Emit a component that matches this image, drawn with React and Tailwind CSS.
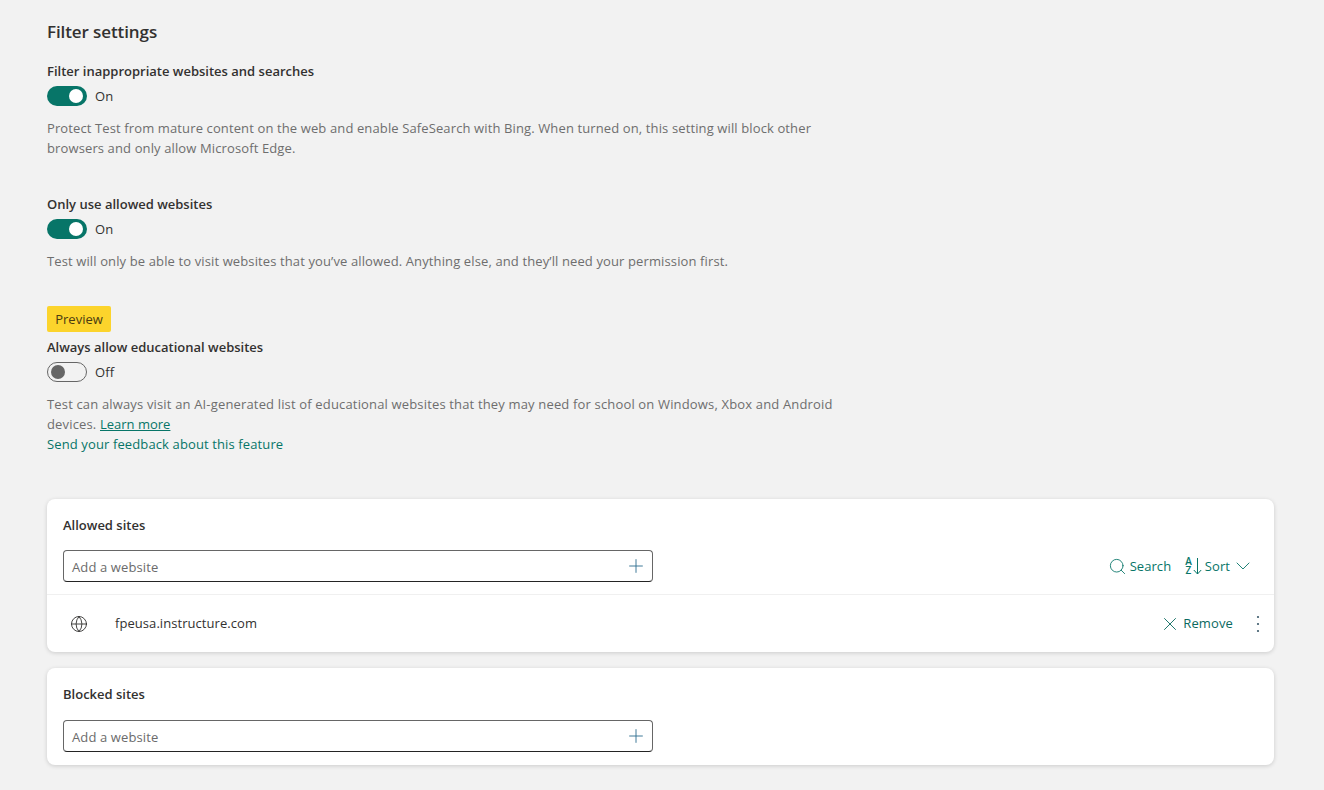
import { Search, Plus, X, ChevronDown, Globe } from 'lucide-react';

const font = { fontFamily: '"Open Sans", sans-serif' };

const Toggle = ({ on }) => (
  <div className="flex items-center h-5 mt-[5px]">
    {on ? (
      <div className="w-10 h-5 rounded-full bg-[#077568] flex items-center justify-end pr-1">
        <div className="w-3.5 h-3.5 rounded-full bg-white" />
      </div>
    ) : (
      <div className="w-10 h-5 rounded-full border border-[#666] flex items-center pl-[3px]">
        <div className="w-3.5 h-3.5 rounded-full bg-[#666]" />
      </div>
    )}
    <span className="ml-2 pt-[2px] text-[13px] tracking-[0.12px] text-[#323130]">{on ? 'On' : 'Off'}</span>
  </div>
);

const Label = ({ children }) => (
  <div className="h-5 leading-5 text-[13px] font-semibold text-[#323130]">{children}</div>
);

const AddInput = () => (
  <div className="w-[590px] h-8 rounded-[4px] border border-[#666] border-b-[#242424] bg-white flex items-center justify-between pl-2 pr-[5px]">
    <span className="pt-[3px] text-[13px] tracking-[0.12px] text-[#6b6b6b]">Add a website</span>
    <Plus size={22} strokeWidth={1} className="text-[#2f6f8f]" />
  </div>
);

const AzIcon = () => (
  <div className="flex items-center gap-[1px] text-[#077568]">
    <div className="flex flex-col items-center text-[10px] leading-[9px] font-semibold">
      <span>A</span>
      <span>Z</span>
    </div>
    <svg width="9" height="18" viewBox="0 0 9 18" fill="none" stroke="currentColor" strokeWidth="1">
      <path d="M4.5 1v16M0.8 13l3.7 4 3.7-4" />
    </svg>
  </div>
);

const MoreDots = () => (
  <svg width="24" height="24" viewBox="0 0 24 24" fill="#3b5a6b" className="ml-[13px]">
    <circle cx="12" cy="5" r="1.1" />
    <circle cx="12" cy="12" r="1.1" />
    <circle cx="12" cy="19" r="1.1" />
  </svg>
);

const App = () => {
  return (
    <div style={font} className="min-h-[790px] bg-[#f2f2f2] pl-[47px] pr-[50px] pt-5 overflow-hidden">
      <h1 className="h-6 leading-6 text-[17px] font-semibold tracking-[-0.1px] text-[#323130]">Filter settings</h1>

      <div className="mt-[17px]">
        <Label>Filter inappropriate websites and searches</Label>
        <Toggle on />
        <p className="mt-3 w-[800px] text-[13px] leading-5 tracking-[0.12px] text-[#6e6e6e]">
          Protect Test from mature content on the web and enable SafeSearch with Bing. When turned on, this setting will block other browsers and only allow Microsoft Edge.
        </p>
      </div>

      <div className="mt-9">
        <Label>Only use allowed websites</Label>
        <Toggle on />
        <p className="mt-3 text-[13px] leading-5 tracking-[0.12px] text-[#6e6e6e]">
          Test will only be able to visit websites that you’ve allowed. Anything else, and they’ll need your permission first.
        </p>
      </div>

      <div className="mt-[35px]">
        <div className="w-16 h-[26px] pt-[2px] rounded-[2px] bg-[#fcd42c] flex items-center justify-center text-[13px] text-[#4a3b12]">Preview</div>
        <div className="mt-[5px]">
          <Label>Always allow educational websites</Label>
        </div>
        <Toggle />
        <p className="mt-3 w-[800px] text-[13px] leading-5 tracking-[0.16px] text-[#6e6e6e]">
          Test can always visit an AI-generated list of educational websites that they may need for school on Windows, Xbox and Android devices. <span className="text-[#077568] underline tracking-[0px]">Learn more</span>
        </p>
        <p className="text-[13px] leading-5 tracking-[0.12px] text-[#077568]">Send your feedback about this feature</p>
      </div>

      <section className="mt-[45px] bg-white rounded-lg shadow-[0_1px_4px_rgba(0,0,0,0.16)]">
        <div className="px-4 pt-4 pb-3 border-b border-[#f0f0f0]">
          <div className="h-5 leading-5 text-[13px] font-semibold text-[#323130]">Allowed sites</div>
          <div className="mt-[15px] flex items-center justify-between">
            <AddInput />
            <div className="flex items-center text-[13px] tracking-[0.06px] text-[#077568] pr-[3px]">
              <Search size={19} strokeWidth={1.1} />
              <span className="ml-[3px] pt-[2px]">Search</span>
              <div className="ml-[14px]"><AzIcon /></div>
              <span className="ml-[3px] pt-[2px]">Sort</span>
              <ChevronDown size={24} strokeWidth={0.9} className="ml-[1px]" />
            </div>
          </div>
        </div>
        <div className="h-[57px] flex items-center pl-[23px] pr-1">
          <Globe size={18} strokeWidth={1.2} className="text-[#323130]" />
          <span className="ml-[27px] text-[13px] tracking-[0.06px] text-[#323130]">fpeusa.instructure.com</span>
          <div className="ml-auto flex items-center text-[13px] tracking-[0.12px] text-[#0b6a5f]">
            <X size={22} strokeWidth={1} />
            <span className="ml-[2px]">Remove</span>
            <MoreDots />
          </div>
        </div>
      </section>

      <section className="mt-4 h-[97px] bg-white rounded-lg shadow-[0_1px_4px_rgba(0,0,0,0.16)] px-4 pt-4">
        <div className="h-5 leading-5 text-[13px] font-semibold text-[#323130]">Blocked sites</div>
        <div className="mt-[16px]">
          <AddInput />
        </div>
      </section>
    </div>
  );
};

export default App;
